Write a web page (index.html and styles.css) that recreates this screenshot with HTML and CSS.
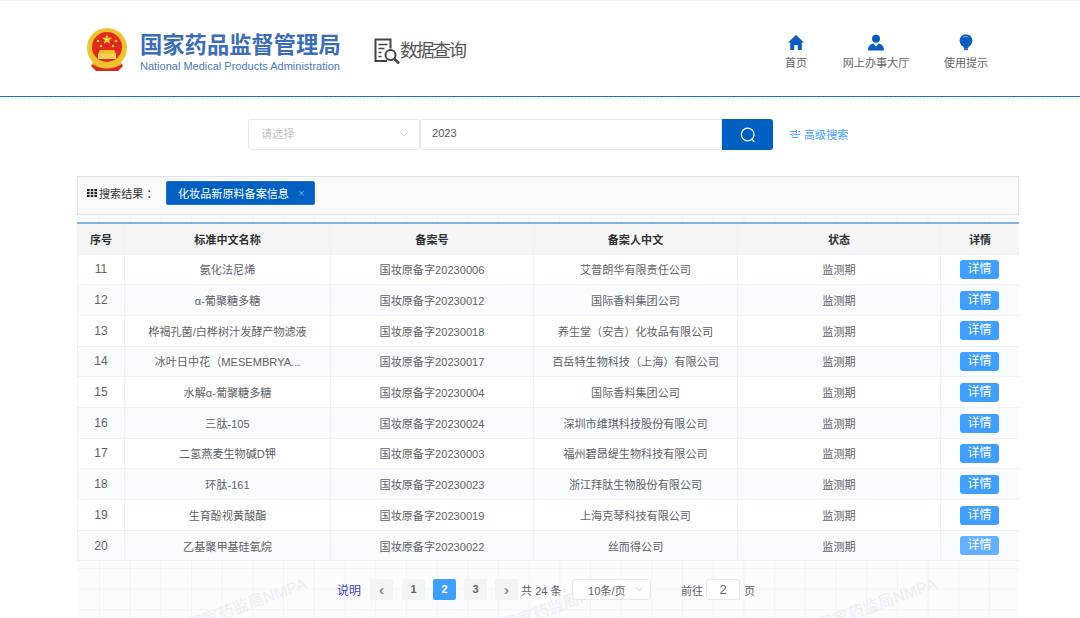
FILE: index.html
```html
<!DOCTYPE html>
<html lang="zh">
<head>
<meta charset="utf-8">
<title>数据查询</title>
<link rel="stylesheet" href="styles.css">
</head>
<body>
<header class="header">
  <div class="brand">
    <svg class="emblem" viewBox="0 0 40 44">
      <path d="M9 30 L4 38 L9 43 H31 L36 38 L31 30Z" fill="#d8281f"/>
      <circle cx="20" cy="20" r="20" fill="#f2c230"/>
      <circle cx="20" cy="19" r="15" fill="#e0281c"/>
      <path d="M7 31 Q20 42 33 31 L35 36 Q20 45 5 36Z" fill="#f2c230"/>
      <path d="M11 26h18v5H11z" fill="#f6cf55"/>
      <path d="M13 22h14l2 4H11z" fill="#f2c230"/>
      <path d="M20 6l1.300 3.800h4l-3.200 2.400 1.200 3.800-3.300-2.300-3.300 2.300 1.200-3.800-3.200-2.400h4z" fill="#f8d23a"/>
      <circle cx="11" cy="13" r="1.300" fill="#f8d23a"/><circle cx="14" cy="18" r="1.300" fill="#f8d23a"/>
      <circle cx="26" cy="18" r="1.300" fill="#f8d23a"/><circle cx="29" cy="13" r="1.300" fill="#f8d23a"/>
    </svg>
    <div class="brand-text">
      <div class="brand-cn">国家药品监督管理局</div>
      <div class="brand-en">National Medical Products Administration</div>
    </div>
  </div>
  <div class="query-title">
    <svg class="query-icon" viewBox="0 0 26 26" fill="none" stroke="#444" stroke-width="2">
      <path d="M13 23H1.500V1.500h15v9"/>
      <path d="M4.500 6.500h9M4.500 10.500h6M4.500 14.500h3M4.500 18.500h3" stroke-width="1.600"/>
      <circle cx="16.500" cy="17" r="5"/>
      <path d="M20 20.500L25 25.500" stroke-width="2.600"/>
    </svg>
    <span>数据查询</span>
  </div>
  <nav class="nav">
    <a class="nav-item nav-home">
      <svg class="nav-icon" viewBox="0 0 16 16"><path d="M8 .5L0 8h2.200v7.500H6.200V10.500h3.600v5h4V8H16z" fill="#0a5cbd"/></svg>
      <span>首页</span>
    </a>
    <a class="nav-item nav-hall">
      <svg class="nav-icon" viewBox="0 0 16 16"><circle cx="8" cy="4.200" r="4" fill="#0a5cbd"/><path d="M0 16c0-4.500 2.500-6.500 5.300-7L8 12l2.700-3c2.800.5 5.300 2.500 5.300 7z" fill="#0a5cbd"/></svg>
      <span>网上办事大厅</span>
    </a>
    <a class="nav-item nav-tips">
      <svg class="nav-icon" viewBox="0 0 16 18"><circle cx="8" cy="7" r="6.800" fill="#0a5cbd"/><path d="M5 13h6l-1 2.500H6z" fill="#0a5cbd"/><path d="M6 16.500h4" stroke="#0a5cbd" stroke-width="1.200"/><path d="M5 3.500c2-1.500 4-1 5.500 0" stroke="#8fbdf0" fill="none"/></svg>
      <span>使用提示</span>
    </a>
  </nav>
</header>
<div class="hatch"></div>

<section class="search">
  <div class="select select-type">
    <span class="lift">请选择</span>
    <svg class="chevron" viewBox="0 0 10 6"><path d="M.5.500L5 5 9.500.5" fill="none" stroke="#c0c4cc"/></svg>
  </div>
  <div class="search-input">2023</div>
  <button class="search-btn">
    <svg viewBox="0 0 16 16" class="search-icon" fill="none" stroke="#fff" stroke-width="1.200"><circle cx="7.700" cy="7.500" r="6.300"/><path d="M11.800 12l2.500 2.800"/></svg>
  </button>
  <a class="advanced">
    <svg class="adv-icon" viewBox="0 0 10 9" stroke="#4a9eff" fill="none"><path d="M0 1.500h6M8 1.500h2M0 4.500h2M4 4.500h6M1.500 7.500h7"/><path d="M6.500 0v3M3 3v3" stroke-width="1"/></svg>
    <span>高级搜索</span>
  </a>
</section>

<main class="panel">
  <div class="result-bar">
    <svg class="grid-icon" viewBox="0 0 10 8" fill="#222"><path d="M0 0h2.600v2.200H0zM3.700 0h2.600v2.200H3.700zM7.400 0H10v2.200H7.400zM0 2.900h2.600v2.200H0zM3.700 2.900h2.600v2.200H3.700zM7.400 2.900H10v2.200H7.400zM0 5.800h2.600V8H0zM3.700 5.800h2.600V8H3.700zM7.400 5.800H10V8H7.400z"/></svg>
    <span class="result-label">搜索结果 <span class="cp">：</span></span>
    <div class="tag"><span>化妆品新原料备案信息</span><i class="tag-close">×</i></div>
  </div>
  <div class="pattern">
    <table class="table">
      <colgroup>
        <col class="c-no"><col class="c-name"><col class="c-code"><col class="c-owner"><col class="c-state"><col class="c-more">
      </colgroup>
      <thead>
        <tr><th>序号</th><th>标准中文名称</th><th>备案号</th><th>备案人中文</th><th>状态</th><th>详情</th></tr>
      </thead>
      <tbody>
        <tr><td>11</td><td>氨化法尼烯</td><td>国妆原备字20230006</td><td>艾普朗华有限责任公司</td><td>监测期</td><td><button class="detail">详情</button></td></tr>
        <tr><td>12</td><td>α-葡聚糖多糖</td><td>国妆原备字20230012</td><td>国际香料集团公司</td><td>监测期</td><td><button class="detail">详情</button></td></tr>
        <tr><td>13</td><td>桦褐孔菌/白桦树汁发酵产物滤液</td><td>国妆原备字20230018</td><td>养生堂<span class="cp">（</span>安吉<span class="cp">）</span>化妆品有限公司</td><td>监测期</td><td><button class="detail">详情</button></td></tr>
        <tr><td>14</td><td>冰叶日中花<span class="cp">（</span>MESEMBRYA...</td><td>国妆原备字20230017</td><td>百岳特生物科技<span class="cp">（</span>上海<span class="cp">）</span>有限公司</td><td>监测期</td><td><button class="detail">详情</button></td></tr>
        <tr><td>15</td><td>水解α-葡聚糖多糖</td><td>国妆原备字20230004</td><td>国际香料集团公司</td><td>监测期</td><td><button class="detail">详情</button></td></tr>
        <tr><td>16</td><td>三肽-105</td><td>国妆原备字20230024</td><td>深圳市维琪科技股份有限公司</td><td>监测期</td><td><button class="detail">详情</button></td></tr>
        <tr><td>17</td><td>二氢燕麦生物碱D钾</td><td>国妆原备字20230003</td><td>福州碧昂缇生物科技有限公司</td><td>监测期</td><td><button class="detail">详情</button></td></tr>
        <tr><td>18</td><td>环肽-161</td><td>国妆原备字20230023</td><td>浙江拜肽生物股份有限公司</td><td>监测期</td><td><button class="detail">详情</button></td></tr>
        <tr><td>19</td><td>生育酚视黄酸酯</td><td>国妆原备字20230019</td><td>上海克琴科技有限公司</td><td>监测期</td><td><button class="detail">详情</button></td></tr>
        <tr><td>20</td><td>乙基聚甲基硅氧烷</td><td>国妆原备字20230022</td><td>丝而得公司</td><td>监测期</td><td><button class="detail detail-hover">详情</button></td></tr>
      </tbody>
    </table>
    <div class="pager">
      <a class="pager-note">说明</a>
      <button class="page-btn page-arrow page-prev">‹</button>
      <button class="page-btn">1</button>
      <button class="page-btn page-active">2</button>
      <button class="page-btn">3</button>
      <button class="page-btn page-arrow page-next">›</button>
      <span class="pager-total">共 24 条</span>
      <div class="select page-size">
        <span>10条/页</span>
        <svg class="chevron" viewBox="0 0 10 6"><path d="M.5.500L5 5 9.500.5" fill="none" stroke="#c0c4cc"/></svg>
      </div>
      <span class="pager-goto">前往</span>
      <div class="page-input">2</div>
      <span class="pager-unit">页</span>
    </div>
    <span class="watermark wm-a">国家药监局NMPA</span>
    <span class="watermark wm-b">国家药监局NMPA</span>
    <span class="watermark wm-c">国家药监局NMPA</span>
  </div>
</main>
</body>
</html>
```
FILE: styles.css
```css
* { box-sizing: border-box; }
html, body { margin: 0; height: 618px; overflow: hidden; background: #fff; }
body { font-family: "Liberation Sans", "Noto Sans CJK SC", sans-serif; font-size: 11.100px; color: #606266; }
button { font-family: inherit; border: 0; padding: 0; cursor: pointer; }
.cp { font-family: "Noto Sans CJK TC", sans-serif; }

.header { height: 97px; border-top: 1px solid #eee; border-bottom: 1px solid #1a74cf; display: flex; align-items: flex-start; padding: 27px 0 0 87px; }
.brand { display: flex; gap: 13px; width: 287px; }
.emblem { width: 40px; height: 44px; flex: none; }
.brand-text { padding-top: 2px; width: 202px; }
.brand-cn { font-size: 22.300px; line-height: 26px; font-weight: 700; color: #3a6db5; white-space: nowrap; font-family: "Noto Sans CJK SC", sans-serif; }
.brand-en { font-size: 11px; line-height: 14px; margin-top: 3px; color: #4a78b8; white-space: nowrap; }
.query-title { display: flex; align-items: center; margin-top: 10px; font-size: 18.300px; line-height: 24px; letter-spacing: -2px; color: #555; width: 410px; }
.query-icon { width: 26px; height: 26px; flex: none; }
.nav { display: flex; margin-top: 6px; }
.nav-item { display: flex; flex-direction: column; align-items: center; gap: 4px; line-height: 17px; color: #666; white-space: nowrap; }
.nav-home { width: 24px; margin-right: 34px; }
.nav-hall { width: 68px; margin-right: 33px; }
.nav-tips { width: 46px; }
.nav-icon { width: 16px; height: 17px; }

.hatch { height: 3px; background: repeating-linear-gradient(135deg, #eee 0 1px, #fff 1px 3px); }

.search { display: flex; align-items: center; margin: 19px 0 0 248px; height: 31px; }
.select { display: flex; align-items: center; justify-content: space-between; background: #fff; border: 1px solid #e6e8ee; border-radius: 3px; }
.select-type { width: 172px; height: 31px; padding: 0 11px 0 12px; color: #c0c4cc; }
.lift { margin-bottom: 3px; }
.chevron { width: 8px; height: 5px; }
.search-input { width: 302px; height: 31px; line-height: 27px; padding-left: 11px; border: 1px solid #e6e8ee; border-radius: 3px 0 0 3px; color: #555; }
.search-btn { width: 51px; height: 31px; background: #0060c1; border-radius: 0 3px 3px 0; display: flex; align-items: center; justify-content: center; }
.search-icon { width: 16px; height: 16px; }
.advanced { display: flex; align-items: center; gap: 4px; margin: 0 0 1px 17px; color: #4a9eff; }
.adv-icon { width: 10px; height: 9px; }

.panel { width: 942px; margin: 26px 0 0 77px; }
.result-bar { height: 39px; background: #fafafa; border: 1px solid #e6e6e6; display: flex; align-items: flex-start; padding: 4px 0 0 9px; }
.grid-icon { width: 10px; height: 8px; margin-top: 8px; flex: none; }
.result-label { margin-left: 2px; line-height: 24px; color: #333; width: 67px; white-space: nowrap; }
.tag { width: 149px; height: 24px; background: #0060c1; color: #fff; border: 1px solid #1c75d0; border-radius: 2px; display: flex; align-items: center; padding-left: 11px; white-space: nowrap; }
.tag-close { font-style: normal; color: #6fa8e6; margin-left: 9px; font-size: 11px; }

.pattern { position: relative; height: 403px; padding-top: 7px; background-color: #fafcff;
  background-image: linear-gradient(90deg, #f2f3f7 1px, transparent 1px), linear-gradient(#f3f4f8 1px, transparent 1px);
  background-size: 30.700px 20.600px; background-position: 22px 3px; overflow: hidden; }
.table { position: relative; z-index: 1; width: 942px; table-layout: fixed; border-collapse: collapse; border-top: 2px solid #7fb0e2; background: #fff; }
.c-no { width: 47px; }
.c-name { width: 206px; }
.c-code { width: 203px; }
.c-owner { width: 204px; }
.c-state { width: 203px; }
.c-more { width: 79px; }
th { height: 31px; padding: 0; background: #f5f5f5; border: 1px solid #eef0f5; color: #303133; font-weight: 700; text-align: center; }
td { height: 30.700px; padding: 0; border: 1px solid #eef1f7; text-align: center; white-space: nowrap; color: #606266; }
td:first-child { font-size: 12px; }
tbody tr:nth-child(even) td { background: #f8fbff; }
.detail { display: block; width: 39px; height: 19px; margin: 0.500px 0 0 19px; background: #409eff; border-radius: 3px; color: #fff; font-size: 12px; line-height: 19px; }
.detail-hover { background: #66b1ff; }

.pager { position: relative; z-index: 1; display: flex; align-items: center; height: 21px; margin: 18px 0 0 260px; color: #606266; white-space: nowrap; }
.pager-note { color: #3a3ad0; width: 33px; font-size: 12px; }
.page-btn { width: 23px; height: 21px; margin-right: 8px; background: #f4f4f5; border-radius: 2px; color: #606266; font-weight: 700; font-size: 11px; line-height: 21px; }
.page-arrow { font-size: 15px; font-weight: 400; }
.page-prev { margin-right: 9px; }
.page-next { margin-right: 3px; }
.page-active { background: #409eff; color: #fff; }
.pager-total { width: 51px; }
.page-size { width: 79px; height: 21px; padding: 0 7px 0 15px; }
.pager-goto { margin-left: 30px; width: 25px; }
.page-input { width: 34px; height: 21px; line-height: 19px; border: 1px solid #e6e8ee; border-radius: 3px; background: #fff; text-align: center; font-size: 13px; }
.pager-unit { margin-left: 4px; }

.watermark { position: absolute; font-size: 16px; color: #eceef2; transform: rotate(-20deg); white-space: nowrap; }
.wm-a { left: 107px; top: 376px; }
.wm-b { left: 422px; top: 376px; }
.wm-c { left: 737px; top: 376px; }
```
